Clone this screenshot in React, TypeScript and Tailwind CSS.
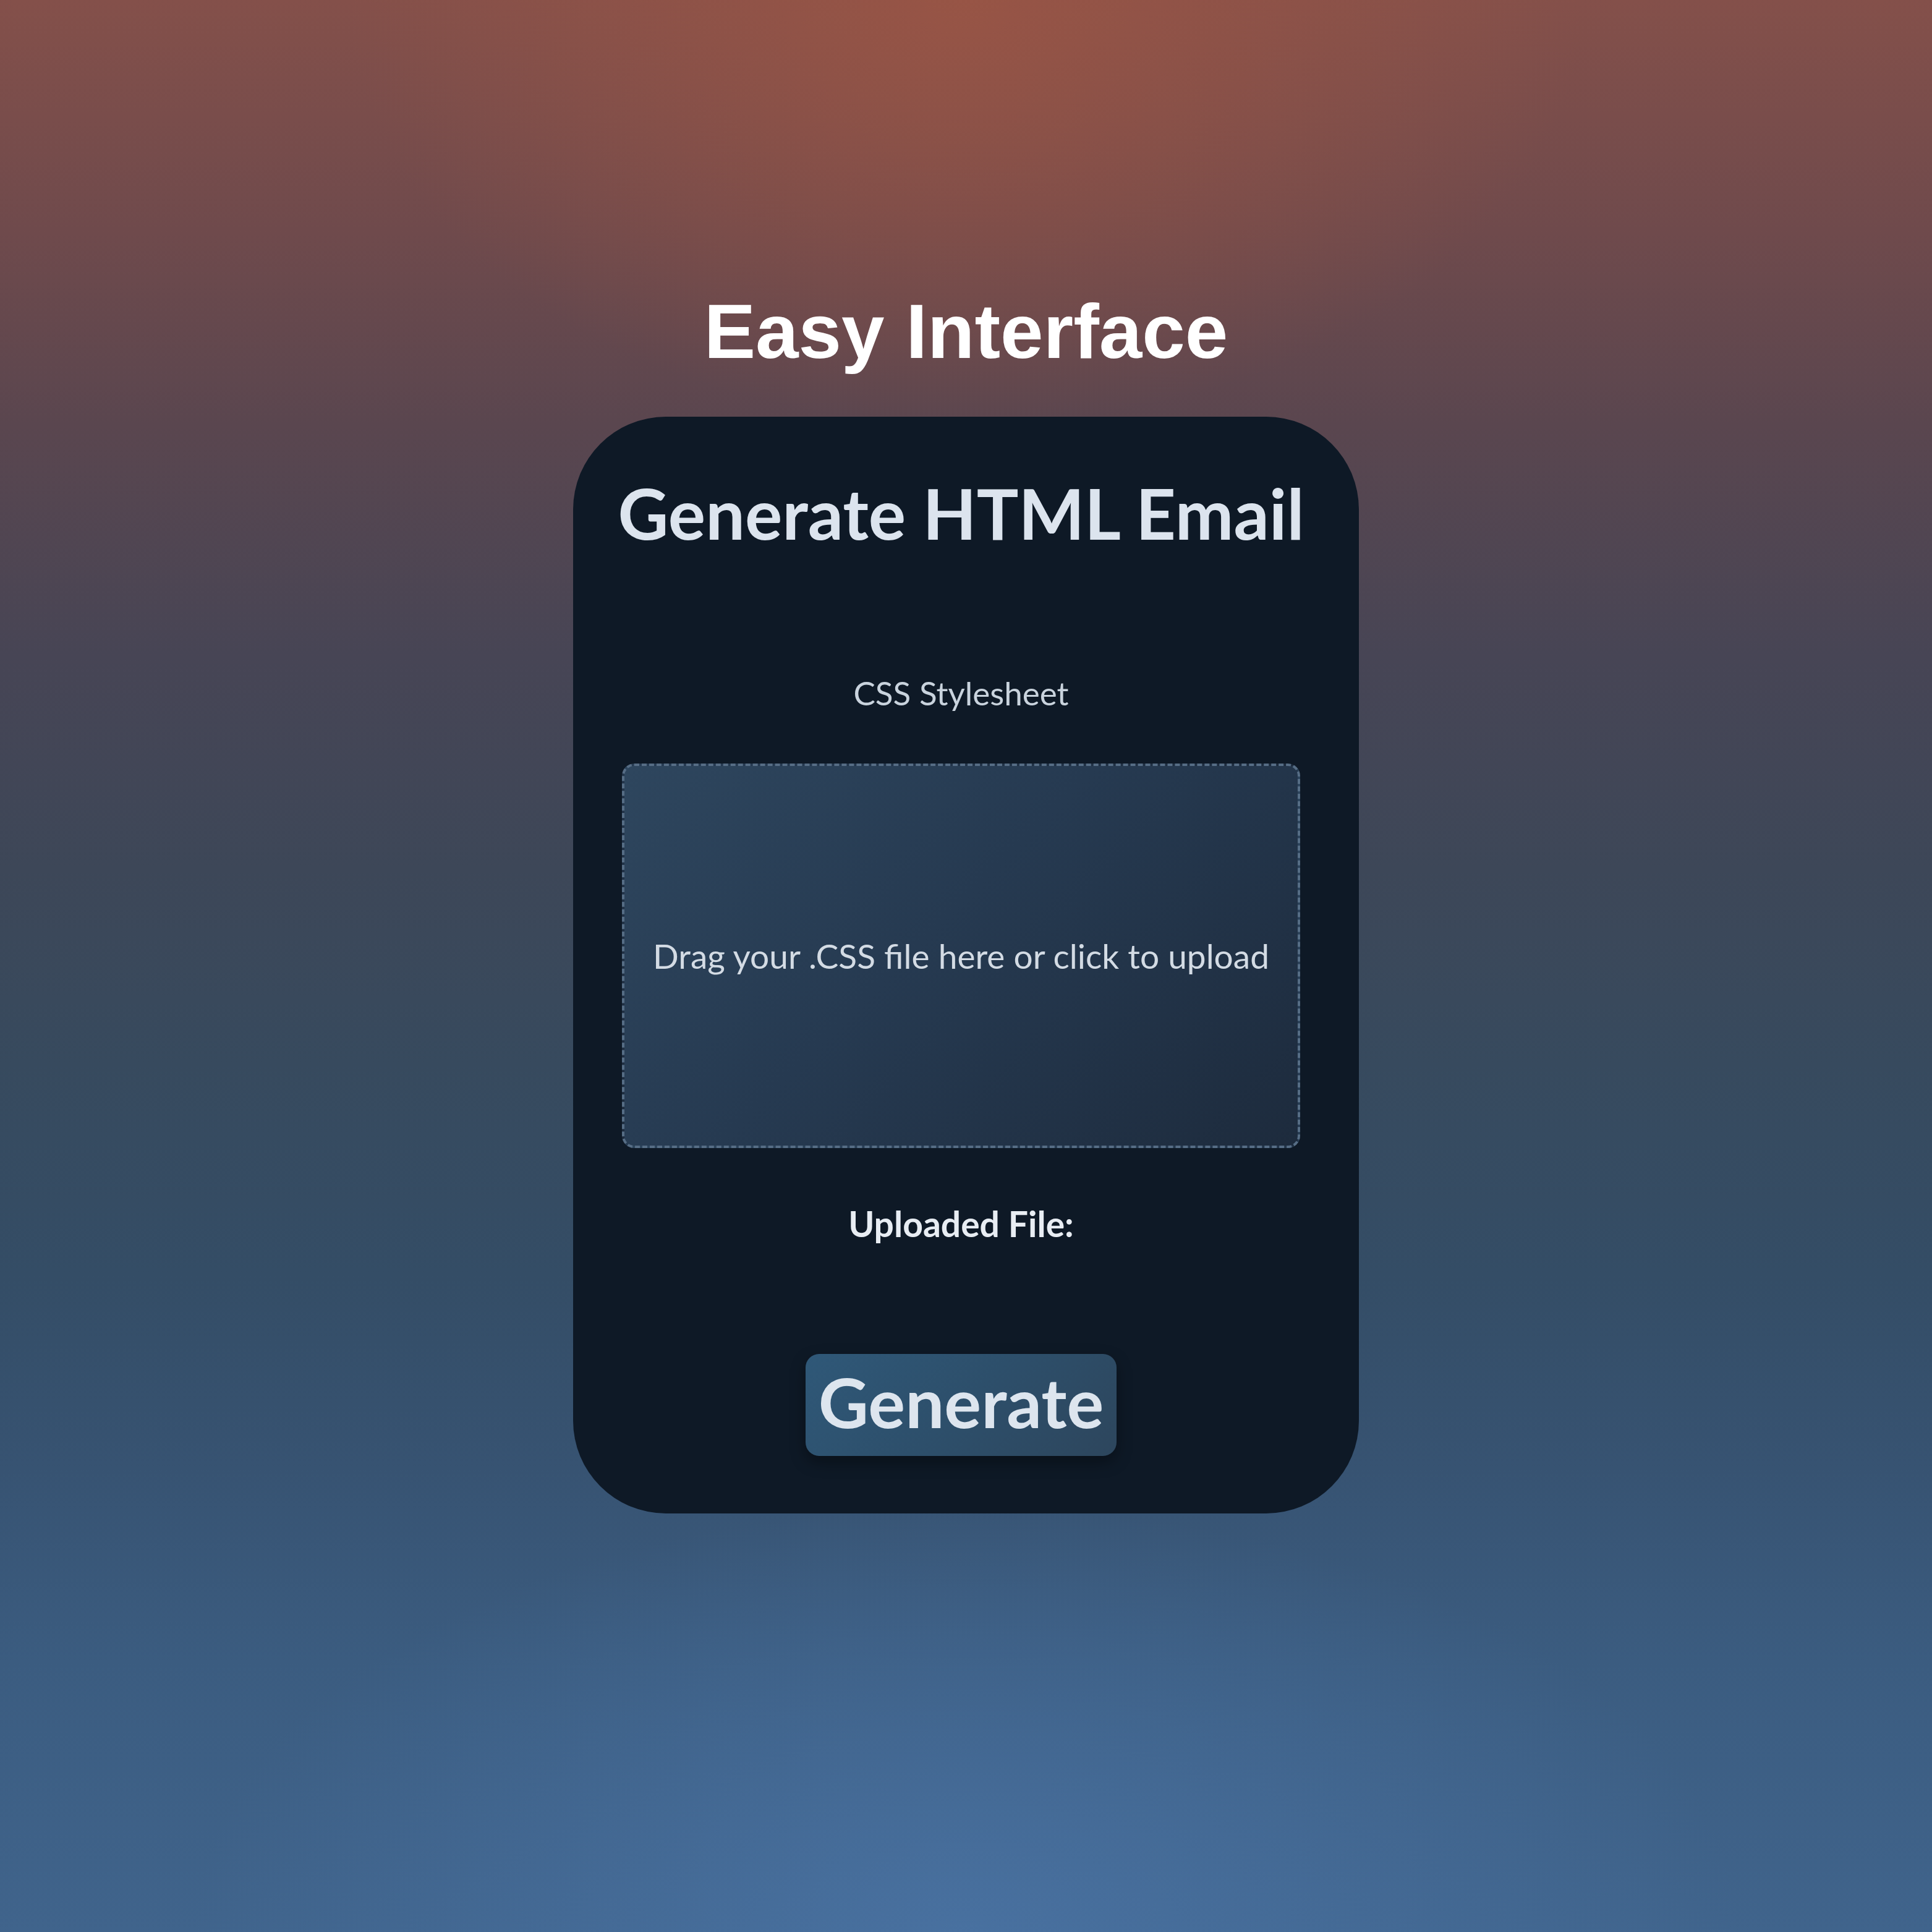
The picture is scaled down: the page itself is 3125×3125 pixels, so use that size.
import React from "react";

export default function App() {
  return (
    <div
      className="relative w-full h-[3125px] overflow-hidden flex flex-col items-center pt-[473px] bg-[radial-gradient(ellipse_32%_22%_at_50%_0%,rgba(158,86,68,0.75),rgba(158,86,68,0)),radial-gradient(ellipse_40%_22%_at_50%_100%,rgba(76,118,168,0.7),rgba(76,118,168,0)),linear-gradient(to_bottom,#84504a_0%,#6f4a4c_12%,#5a464f_22%,#474555_34%,#3d4758_45%,#374a5e_55%,#344d66_66%,#375372_76%,#3b5c80_86%,#40648c_100%)]"
    >
      <h1 className="text-[125px] leading-none font-bold text-white font-['Liberation_Sans',Arial,sans-serif]">
        Easy Interface
      </h1>

      <div className="mt-[76px] w-[1271px] h-[1774px] rounded-[150px] bg-[#0e1926] pl-[79px] pr-[95px] pt-[99px] pb-[93px] flex flex-col items-center font-['Lato','Noto_Sans',sans-serif]">
        <h2 className="text-[113px] leading-none font-bold text-[#dce4ee] whitespace-nowrap">
          Generate HTML Email
        </h2>

        <div className="mt-[208px] text-[53px] leading-none text-[#c9d3dd] whitespace-nowrap">
          CSS Stylesheet
        </div>

        <div className="mt-[88px] w-[1097px] h-[622px] shrink-0 rounded-[20px] border-4 border-dashed border-[#566d85] bg-[linear-gradient(135deg,#2e465e_0%,#263a51_45%,#1d2b3d_100%)] flex items-center justify-center">
          <span className="text-[55px] leading-none text-[#d3dbe4] whitespace-nowrap">
            Drag your .CSS file here or click to upload
          </span>
        </div>

        <div className="mt-[94px] text-[57px] leading-none font-bold text-[#e8edf3] whitespace-nowrap">
          Uploaded File:
        </div>

        <button className="mt-[182px] w-[503px] h-[165px] shrink-0 rounded-[22px] bg-[linear-gradient(135deg,#2f5878_0%,#2d4f6b_50%,#2d465d_100%)] shadow-[0_10px_24px_rgba(0,0,0,0.35)] flex items-start justify-center pt-[21px]">
          <span className="text-[112px] leading-none font-bold text-[#dde5ee]">
            Generate
          </span>
        </button>
      </div>
    </div>
  );
}
